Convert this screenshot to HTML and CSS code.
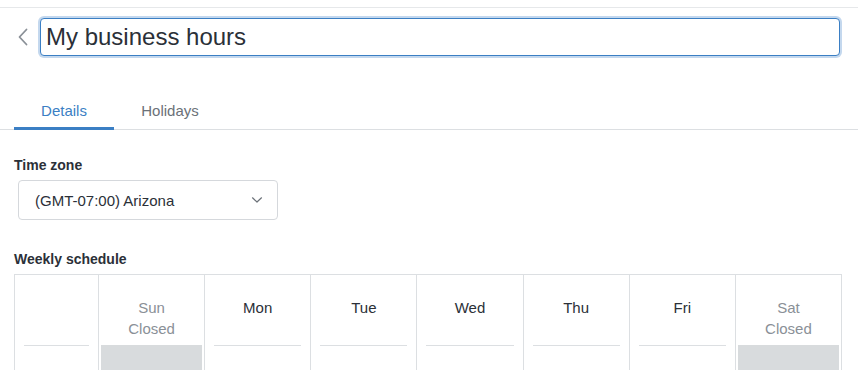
FILE: index.html
```html
<!DOCTYPE html>
<html lang="en">
<head>
    <meta charset="UTF-8">
    <meta name="viewport" content="width=device-width, initial-scale=1.0">
    <title>My business hours</title>
    <link rel="stylesheet" href="styles.css">
</head>
<body>
    <div class="topbar"></div>

    <div class="header">
        <button class="back" aria-label="Back">
            <svg width="12" height="18" viewBox="0 0 12 18"><path d="M9.5 1.5 L2.5 9 L9.5 16.5" fill="none" stroke="#8a9097" stroke-width="1.8" stroke-linecap="round" stroke-linejoin="round"/></svg>
        </button>
        <input class="title-input" type="text" value="My business hours">
    </div>

    <div class="tabs">
        <div class="tab active">Details</div>
        <div class="tab">Holidays</div>
    </div>

    <div class="section">
        <div class="label">Time zone</div>
        <div class="select">
            <span>(GMT-07:00) Arizona</span>
            <svg width="12" height="8" viewBox="0 0 12 8"><path d="M1.5 1.8 L6 6 L10.5 1.8" fill="none" stroke="#6b7178" stroke-width="1.2" stroke-linecap="round" stroke-linejoin="round"/></svg>
        </div>
    </div>

    <div class="section">
        <div class="label">Weekly schedule</div>
        <div class="schedule">
            <div class="col first"><div class="day"></div><div class="rule"></div></div>
            <div class="col closed"><div class="day">Sun<br>Closed</div><div class="block"></div></div>
            <div class="col"><div class="day">Mon</div><div class="rule"></div></div>
            <div class="col"><div class="day">Tue</div><div class="rule"></div></div>
            <div class="col"><div class="day">Wed</div><div class="rule"></div></div>
            <div class="col"><div class="day">Thu</div><div class="rule"></div></div>
            <div class="col"><div class="day">Fri</div><div class="rule"></div></div>
            <div class="col closed"><div class="day">Sat<br>Closed</div><div class="block"></div></div>
        </div>
    </div>
</body>
</html>
```

FILE: styles.css
```css
body {
    margin: 0;
    font-family: "Liberation Sans", Arial, sans-serif;
    color: #2b3038;
    background: #ffffff;
    overflow: hidden;
}
.topbar {
    height: 7px;
    border-bottom: 1px solid #e6e8ea;
}
.header {
    display: flex;
    align-items: center;
    padding: 8px 18px 0 10px;
}
.back {
    background: none;
    border: none;
    padding: 0;
    width: 26px;
    height: 42px;
    display: flex;
    align-items: center;
    justify-content: center;
    margin-right: 3px;
}
.title-input {
    flex: 1;
    height: 38px;
    box-sizing: border-box;
    border: 1px solid #3b7fc4;
    border-radius: 4px;
    box-shadow: 0 0 0 2px #c4d8ee;
    font-family: inherit;
    font-size: 24px;
    color: #2b3038;
    padding: 0 5px;
    outline: none;
    margin-left: 1px;
}
.tabs {
    display: flex;
    margin-top: 34px;
    padding-left: 14px;
    border-bottom: 1px solid #dcdfe2;
}
.tab {
    width: 100px;
    text-align: center;
    font-size: 15px;
    color: #6b7178;
    padding: 10px 0 8px;
    border-bottom: 3px solid transparent;
    margin-bottom: -1px;
}
.tab.active {
    color: #3b7fc4;
    border-bottom-color: #3b7fc4;
}
.tab + .tab {
    width: 112px;
}
.section {
    padding: 0 14px;
}
.label {
    font-size: 14px;
    font-weight: bold;
    color: #2b3038;
    margin-top: 27px;
    margin-bottom: 7px;
}
.section + .section .label {
    margin-top: 31px;
}
.select {
    width: 260px;
    height: 40px;
    box-sizing: border-box;
    margin-left: 4px;
    border: 1px solid #d5d8dc;
    border-radius: 4px;
    display: flex;
    align-items: center;
    justify-content: space-between;
    padding: 0 14px 0 16px;
    font-size: 15px;
    color: #2b3038;
}
.schedule {
    display: grid;
    grid-template-columns: 83px repeat(7, 1fr);
    box-sizing: border-box;
    width: 828px;
    border: 1px solid #dcdfe2;
    border-bottom: none;
    height: 120px;
}
.col {
    border-left: 1px solid #dcdfe2;
    display: flex;
    flex-direction: column;
    padding: 0 2px;
}
.col.first {
    border-left: none;
}
.day {
    height: 70px;
    box-sizing: border-box;
    padding-top: 22px;
    text-align: center;
    font-size: 15px;
    line-height: 21px;
    color: #2b3038;
}
.closed .day {
    color: #8a9097;
}
.rule {
    margin: 0 7px;
    border-top: 1px solid #dcdfe2;
}
.block {
    flex: 1;
    background: #d8dbdd;
}
```
